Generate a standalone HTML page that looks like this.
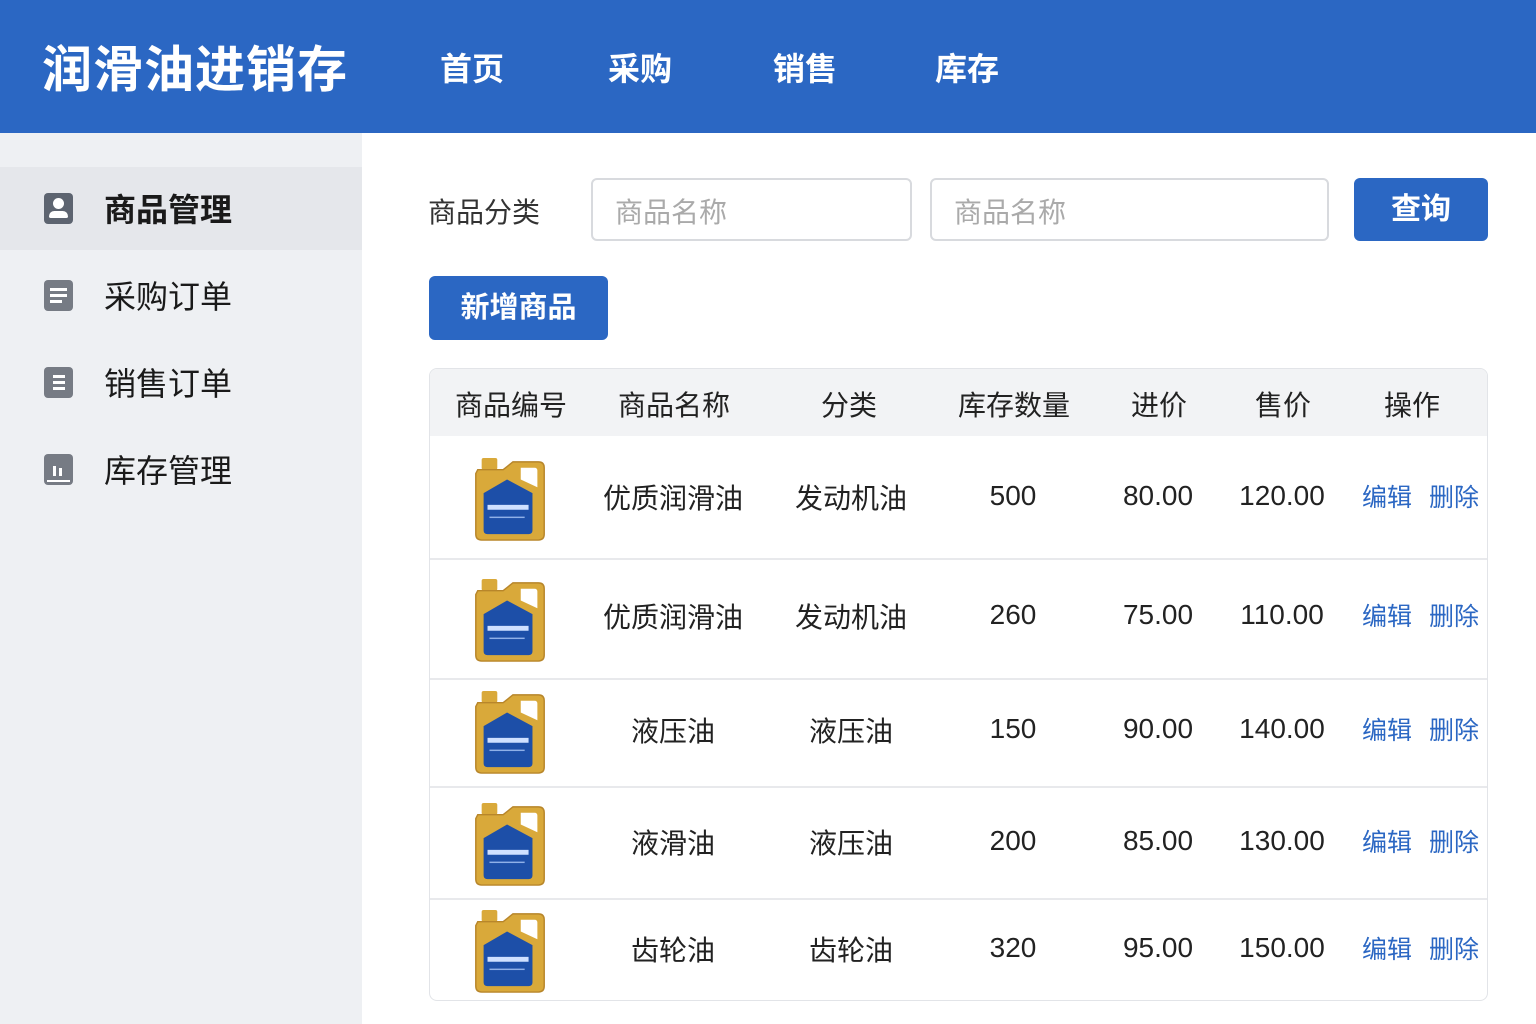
<!DOCTYPE html>
<html><head><meta charset="utf-8"><style>
*{margin:0;padding:0;box-sizing:border-box}
body{width:1536px;height:1024px;overflow:hidden;background:#fff;font-family:"Liberation Sans","Noto Sans CJK SC",sans-serif;position:relative}
.hd{position:absolute;left:0;top:0;width:1536px;height:133px;background:#2b67c3;color:#fff}
.logo{position:absolute;left:42px;top:30px;font-size:50px;font-weight:bold;letter-spacing:1px}
.nav{position:absolute;top:44px;font-size:32px;font-weight:bold}
.sb{position:absolute;left:0;top:133px;width:362px;height:891px;background:#eef0f3}
.it{position:absolute;left:0;width:362px;height:83px}
.it .ic{position:absolute;left:44px;top:26px;width:29px;height:31px;border-radius:4px;background:#767b84}
.it .tx{position:absolute;left:104px;top:18px;font-size:32px;color:#1a1a1a}
.ab{position:absolute;font-size:28px;color:#333}
.inp{position:absolute;top:178px;height:63px;border:2px solid #d8dade;border-radius:6px;font-size:28px;color:#aaa;padding:11px 22px}
.btn{position:absolute;background:#2b67c3;color:#fff;border-radius:6px;font-weight:bold;text-align:center}
.tbl{position:absolute;left:429px;top:368px;width:1059px;height:633px;border:1px solid #e2e4e8;border-radius:8px;overflow:hidden}
.th{position:absolute;left:0;top:0;width:1059px;height:67px;background:#f2f3f5}
.c{position:absolute;transform:translateX(-50%);font-size:28px;color:#222;white-space:nowrap}
.z{margin-top:-3px}
.l{position:absolute;left:0;width:1059px;height:2px;background:#e8e9ec}
.a{position:absolute;font-size:25px;color:#2b67c3;margin-top:-3px}
.can{position:absolute;left:44px;width:74px;height:86px}
</style></head><body>
<div class="hd">
<div class="logo">润滑油进销存</div>
<div class="nav" style="left:440px">首页</div>
<div class="nav" style="left:608px">采购</div>
<div class="nav" style="left:773px">销售</div>
<div class="nav" style="left:935px">库存</div>
</div>
<div class="sb">
<div class="it" style="top:34px;background:#e5e7eb"><div class="ic" style="background:#5d6470"><div style="position:absolute;left:9px;top:5px;width:11px;height:11px;border-radius:50%;background:#fff"></div><div style="position:absolute;left:5px;top:18px;width:19px;height:7px;border-radius:6px 6px 2px 2px;background:#fff"></div></div><div class="tx" style="font-weight:bold">商品管理</div></div>
<div class="it" style="top:121px"><div class="ic"><div style="position:absolute;left:6px;top:8px;width:17px;height:3px;background:#fff"></div><div style="position:absolute;left:6px;top:14px;width:17px;height:3px;background:#fff"></div><div style="position:absolute;left:6px;top:20px;width:12px;height:3px;background:#fff"></div></div><div class="tx">采购订单</div></div>
<div class="it" style="top:208px"><div class="ic"><div style="position:absolute;left:9px;top:8px;width:12px;height:3px;background:#fff"></div><div style="position:absolute;left:9px;top:14px;width:12px;height:3px;background:#fff"></div><div style="position:absolute;left:9px;top:20px;width:12px;height:3px;background:#fff"></div></div><div class="tx">销售订单</div></div>
<div class="it" style="top:295px"><div class="ic"><div style="position:absolute;left:9px;top:12px;width:3px;height:10px;background:#fff"></div><div style="position:absolute;left:15px;top:14px;width:3px;height:8px;background:#fff"></div><div style="position:absolute;left:3px;top:26px;width:23px;height:2px;background:#fff"></div></div><div class="tx">库存管理</div></div>
</div>
<div class="ab" style="left:428px;top:191px">商品分类</div>
<div class="inp" style="left:591px;width:321px">商品名称</div>
<div class="inp" style="left:930px;width:399px">商品名称</div>
<div class="btn" style="left:1354px;top:178px;width:134px;height:63px;font-size:30px;line-height:63px">查询</div>
<div class="btn" style="left:429px;top:276px;width:179px;height:64px;font-size:29px;line-height:64px">新增商品</div>
<div class="tbl">
<div class="th"></div>
<div class="c" style="left:81px;top:15px">商品编号</div>
<div class="c" style="left:244px;top:15px">商品名称</div>
<div class="c" style="left:419px;top:15px">分类</div>
<div class="c" style="left:584px;top:15px">库存数量</div>
<div class="c" style="left:729px;top:15px">进价</div>
<div class="c" style="left:853px;top:15px">售价</div>
<div class="c" style="left:982px;top:15px">操作</div>
<div class="l" style="top:189px"></div><div class="l" style="top:309px"></div><div class="l" style="top:417px"></div><div class="l" style="top:529px"></div>
</div>
<svg width="0" height="0" style="position:absolute"><defs><g id="can">
<rect x="8" y="2" width="16" height="12" rx="2" fill="#d9a93a"/>
<path d="M4 14 L30 14 L40 6 L66 6 Q72 6 72 12 L72 80 Q72 86 66 86 L8 86 Q2 86 2 80 L2 18 Z" fill="#d9a93a" stroke="#b8862a" stroke-width="1.5"/>
<path d="M48 12 L62 12 Q65 12 65 15 L65 32 L48 24 Z" fill="#fff"/>
<path d="M10 38 L34 24 L60 38 L60 76 Q60 80 56 80 L14 80 Q10 80 10 76 Z" fill="#1d4fa8"/>
<rect x="14" y="50" width="42" height="5" fill="#cfe0ff"/>
<rect x="16" y="62" width="36" height="1.5" fill="#8fb0e8"/>
</g></defs></svg>
<svg class="can" style="left:473px;top:456px" viewBox="0 0 74 88"><use href="#can"/></svg>
<svg class="can" style="left:473px;top:577px" viewBox="0 0 74 88"><use href="#can"/></svg>
<svg class="can" style="left:473px;top:689px" viewBox="0 0 74 88"><use href="#can"/></svg>
<svg class="can" style="left:473px;top:801px" viewBox="0 0 74 88"><use href="#can"/></svg>
<svg class="can" style="left:473px;top:908px" viewBox="0 0 74 88"><use href="#can"/></svg>
<div class="c z" style="left:673px;top:480px">优质润滑油</div><div class="c z" style="left:851px;top:480px">发动机油</div><div class="c" style="left:1013px;top:480px">500</div><div class="c" style="left:1158px;top:480px">80.00</div><div class="c" style="left:1282px;top:480px">120.00</div><div class="a" style="left:1362px;top:481px">编辑</div><div class="a" style="left:1429px;top:481px">删除</div>
<div class="c z" style="left:673px;top:599px">优质润滑油</div><div class="c z" style="left:851px;top:599px">发动机油</div><div class="c" style="left:1013px;top:599px">260</div><div class="c" style="left:1158px;top:599px">75.00</div><div class="c" style="left:1282px;top:599px">110.00</div><div class="a" style="left:1362px;top:600px">编辑</div><div class="a" style="left:1429px;top:600px">删除</div>
<div class="c z" style="left:673px;top:713px">液压油</div><div class="c z" style="left:851px;top:713px">液压油</div><div class="c" style="left:1013px;top:713px">150</div><div class="c" style="left:1158px;top:713px">90.00</div><div class="c" style="left:1282px;top:713px">140.00</div><div class="a" style="left:1362px;top:714px">编辑</div><div class="a" style="left:1429px;top:714px">删除</div>
<div class="c z" style="left:673px;top:825px">液滑油</div><div class="c z" style="left:851px;top:825px">液压油</div><div class="c" style="left:1013px;top:825px">200</div><div class="c" style="left:1158px;top:825px">85.00</div><div class="c" style="left:1282px;top:825px">130.00</div><div class="a" style="left:1362px;top:826px">编辑</div><div class="a" style="left:1429px;top:826px">删除</div>
<div class="c z" style="left:673px;top:932px">齿轮油</div><div class="c z" style="left:851px;top:932px">齿轮油</div><div class="c" style="left:1013px;top:932px">320</div><div class="c" style="left:1158px;top:932px">95.00</div><div class="c" style="left:1282px;top:932px">150.00</div><div class="a" style="left:1362px;top:933px">编辑</div><div class="a" style="left:1429px;top:933px">删除</div>
</body></html>
